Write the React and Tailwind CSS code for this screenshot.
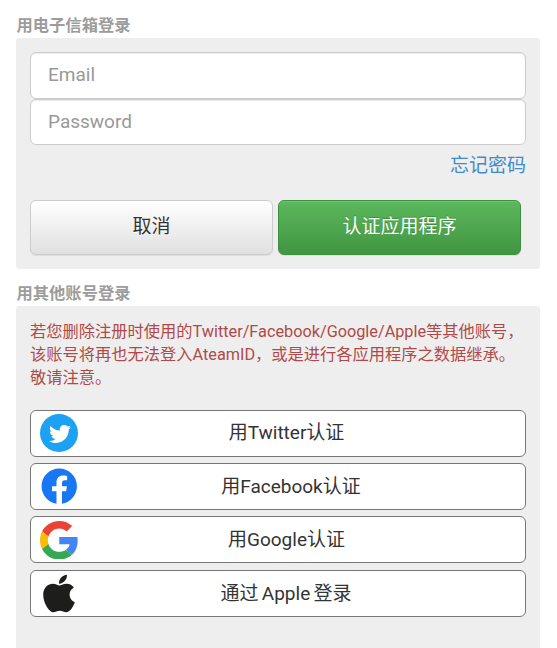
import { useState } from 'react';
import { FaApple, FaFacebook, FaTwitter } from 'react-icons/fa';

const TwitterIcon = () => (
	<span className="w-[38px] h-[38px] rounded-full bg-[#1da1f2] flex items-center justify-center">
		<FaTwitter className="w-[22px] h-[22px] mt-px ml-px text-white" />
	</span>
);

const GoogleIcon = () => (
	<svg viewBox="0 0 48 48" className="w-[38.5px] h-[38.5px]">
		<path
			fill="#ea4335"
			d="M24 9.5c3.54 0 6.71 1.22 9.21 3.6l6.85-6.85C35.9 2.38 30.47 0 24 0 14.62 0 6.51 5.38 2.56 13.22l7.98 6.19C12.43 13.72 17.74 9.5 24 9.5z"
		/>
		<path
			fill="#4285f4"
			d="M46.98 24.55c0-1.57-.15-3.09-.38-4.55H24v9.02h12.94c-.58 2.96-2.26 5.48-4.78 7.18l7.73 6c4.51-4.18 7.09-10.36 7.09-17.65z"
		/>
		<path
			fill="#fbbc05"
			d="M10.53 28.59c-.48-1.45-.76-2.99-.76-4.59s.27-3.14.76-4.59l-7.98-6.19C.92 16.46 0 20.12 0 24c0 3.88.92 7.54 2.56 10.78l7.97-6.19z"
		/>
		<path
			fill="#34a853"
			d="M24 48c6.48 0 11.93-2.13 15.89-5.81l-7.73-6c-2.15 1.45-4.92 2.3-8.16 2.3-6.26 0-11.57-4.22-13.47-9.91l-7.98 6.19C6.51 42.62 14.62 48 24 48z"
		/>
	</svg>
);

const providers = [
	{
		id: 'twitter',
		label: '用Twitter认证',
		icon: <TwitterIcon />,
		labelStyle: 'pl-0',
	},
	{
		id: 'facebook',
		label: '用Facebook认证',
		icon: <FaFacebook className="w-[36.5px] h-[36.5px] text-[#1877f2]" />,
		labelStyle: 'pl-[9px]',
	},
	{
		id: 'google',
		label: '用Google认证',
		icon: <GoogleIcon />,
		labelStyle: 'pl-0',
	},
	{
		id: 'apple',
		label: '通过 Apple 登录',
		icon: <FaApple className="w-[43px] h-[43px] text-[#1d1d1b]" />,
		labelStyle: 'pr-px [word-spacing:-1.5px]',
	},
];

function App() {
	const [email, setEmail] = useState('');
	const [password, setPassword] = useState('');

	const inputStyle =
		'block w-full h-[46.5px] pb-px px-[17px] bg-white border border-[#ccc] rounded-md text-[19px] text-[#555] placeholder:text-[#999] shadow-[inset_0_1px_1px_rgba(0,0,0,0.075)] outline-none';

	return (
		<div className="h-screen overflow-hidden bg-white pl-4 pr-[17px] pt-[13px] flex flex-col font-[Roboto,'Noto_Sans_CJK_SC',sans-serif] text-[#333]">
			<h2 className="h-[25px] pl-[0.5px] leading-[25px] text-[16.3px] font-bold text-[#9c9c9c]">
				用电子信箱登录
			</h2>
			<form
				className="h-[230.5px] shrink-0 bg-[#eee] rounded-[3px] px-3.5 pt-3.5"
				onSubmit={(e) => e.preventDefault()}
			>
				<input
					type="email"
					placeholder="Email"
					className={inputStyle}
					value={email}
					onChange={(e) => setEmail(e.target.value)}
				/>
				<input
					type="password"
					placeholder="Password"
					className={inputStyle}
					value={password}
					onChange={(e) => setPassword(e.target.value)}
				/>
				<div className="mt-[7px] h-7 leading-7 text-right text-[19px] text-[#428bca]">
					<a href="#">忘记密码</a>
				</div>
				<div className="mt-5 flex gap-[5px] pr-[5px]">
					<button
						type="button"
						className="flex-1 h-[55px] rounded-md border border-[#ccc] bg-linear-to-b from-white to-[#e0e0e0] text-[19px] text-[#333] shadow-[inset_0_1px_0_rgba(255,255,255,0.15),0_1px_1px_rgba(0,0,0,0.075)] [text-shadow:0_1px_0_#fff]"
					>
						取消
					</button>
					<button
						type="submit"
						className="flex-1 h-[55px] rounded-md border border-[#3e8f3e] bg-linear-to-b from-[#5cb85c] to-[#419641] text-[19px] text-white shadow-[inset_0_1px_0_rgba(255,255,255,0.15),0_1px_1px_rgba(0,0,0,0.075)] [text-shadow:0_-1px_0_rgba(0,0,0,0.2)]"
					>
						认证应用程序
					</button>
				</div>
			</form>

			<h2 className="mt-[12.5px] h-[25px] shrink-0 pl-[0.5px] leading-[25px] text-[16.3px] font-bold text-[#9c9c9c]">
				用其他账号登录
			</h2>
			<div className="flex-1 bg-[#eee] rounded-t-[3px] px-3.5 pt-[13.5px]">
				<p className="text-[16.25px] leading-[23.2px] whitespace-nowrap text-[#b04a48]">
					若您删除注册时使用的Twitter/Facebook/Google/Apple等其他账号，
					<br />
					该账号将再也无法登入AteamID，或是进行各应用程序之数据继承。
					<br />
					敬请注意。
				</p>
				<div className="mt-[20.5px] flex flex-col gap-[6.4px]">
					{providers.map((p) => (
						<button
							key={p.id}
							className="h-[47px] flex items-center pl-[7px] pr-[31px] bg-white border border-[#777] rounded-md text-[19px] text-[#333]"
						>
							<span className="w-[42px] flex items-center justify-center">
								{p.icon}
							</span>
							<span className={`flex-1 text-center -ml-[1px] pt-px ${p.labelStyle}`}>
								{p.label}
							</span>
						</button>
					))}
				</div>
			</div>
		</div>
	);
}

export default App;
